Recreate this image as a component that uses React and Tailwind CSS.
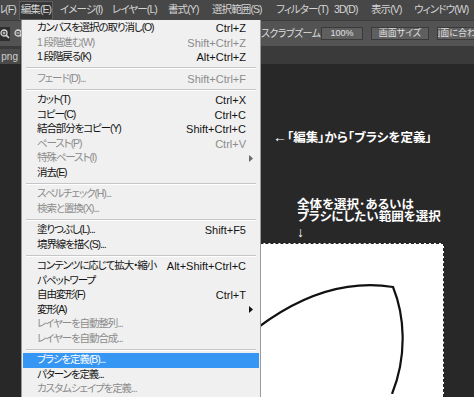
import React from 'react';

// Photoshop "編集" menu open over a dark canvas
const font = { fontFamily: '"Liberation Sans","Noto Sans CJK JP",sans-serif', fontFeatureSettings: '"palt"' };

const menuBar = [
  ['イメージ(I)', 'w-[52px]'],
  ['レイヤー(L)', 'w-[56px]'],
  ['書式(Y)', 'w-[44px]'],
  ['選択範囲(S)', 'w-[64px]'],
  ['フィルター(T)', 'w-[58px]'],
  ['3D(D)', 'w-[37px]'],
  ['表示(V)', 'w-[43px]'],
  ['ウィンドウ(W)', 'w-[60px]'],
];

// sep = separator ; off = disabled ; sub = has submenu ; hi = highlighted
const items = [
  { label: 'カンバスを選択の取り消し(O)', key: 'Ctrl+Z' },
  { label: '1 段階進む(W)', key: 'Shift+Ctrl+Z', off: true },
  { label: '1 段階戻る(K)', key: 'Alt+Ctrl+Z' },
  { sep: true },
  { label: 'フェード(D)...', key: 'Shift+Ctrl+F', off: true },
  { sep: true },
  { label: 'カット(T)', key: 'Ctrl+X' },
  { label: 'コピー(C)', key: 'Ctrl+C' },
  { label: '結合部分をコピー(Y)', key: 'Shift+Ctrl+C' },
  { label: 'ペースト(P)', key: 'Ctrl+V', off: true },
  { label: '特殊ペースト(I)', off: true, sub: true },
  { label: '消去(E)' },
  { sep: true },
  { label: 'スペルチェック(H)...', off: true },
  { label: '検索と置換(X)...', off: true },
  { sep: true },
  { label: '塗りつぶし(L)...', key: 'Shift+F5' },
  { label: '境界線を描く(S)...' },
  { sep: true },
  { label: 'コンテンツに応じて拡大・縮小', key: 'Alt+Shift+Ctrl+C' },
  { label: 'パペットワープ' },
  { label: '自由変形(F)', key: 'Ctrl+T' },
  { label: '変形(A)', sub: true },
  { label: 'レイヤーを自動整列...', off: true },
  { label: 'レイヤーを自動合成...', off: true },
  { sep: true },
  { label: 'ブラシを定義(B)...', hi: true },
  { label: 'パターンを定義...' },
  { label: 'カスタムシェイプを定義...', off: true },
];

const Arrow = ({ off }) => (
  <svg width="4" height="7" viewBox="0 0 4 7" className="absolute right-[6px]">
    <path d="M0 0 L4 3.5 L0 7 Z" fill={off ? '#6a6a6a' : '#111'} />
  </svg>
);

const MenuRow = ({ item }) => {
  if (item.sep) {
    return (
      <div className="h-[7px] flex flex-col justify-center px-[4px]">
        <div className="h-px bg-[#c6c6c6]" />
        <div className="h-px bg-white" />
      </div>
    );
  }
  const color = item.hi ? 'text-white' : item.off ? 'text-[#8c8c8c]' : 'text-[#141414]';
  return (
    <div
      className={`relative h-[14.5px] flex items-center justify-between pl-[14px] pr-[13px] mx-[1px] ${
        item.hi ? 'bg-[#3596f4]' : ''
      } ${color}`}
    >
      <span className="whitespace-nowrap text-[10.5px] tracking-[-1.1px]">{item.label}</span>
      {item.key && <span className="whitespace-nowrap">{item.key}</span>}
      {item.sub && <Arrow off={item.off} />}
    </div>
  );
};

const ZoomIcon = ({ minus }) => (
  <svg width="10" height="10" viewBox="0 0 10 10">
    <circle cx="4" cy="4" r="3" fill="none" stroke="#d8d8d8" strokeWidth="1.3" />
    <path d="M6.2 6.2 L9 9" stroke="#d8d8d8" strokeWidth="1.6" />
    {!minus && <path d="M4 2.5 V5.5" stroke="#d8d8d8" strokeWidth="1" />}
    <path d="M2.5 4 H5.5" stroke="#d8d8d8" strokeWidth="1" />
  </svg>
);

const OptButton = ({ children, w }) => (
  <div
    className={`${w} h-[13px] flex items-center justify-center overflow-hidden bg-[#5f5f5f] border border-[#3a3a3a] text-[9px] text-[#e0e0e0] whitespace-nowrap shrink-0`}
  >
    {children}
  </div>
);

export default function App() {
  return (
    <div className="relative w-[474px] h-[397px] overflow-hidden bg-[#282828] flex flex-col" style={font}>
      {/* menu bar */}
      <div className="h-[20px] shrink-0 bg-[#474747] flex items-center text-[10.5px] tracking-[-0.9px] text-[#d4d4d4]">
        <div className="w-[22px] overflow-hidden flex justify-end">
          <span className="whitespace-nowrap pr-[3px]">ファイル(F)</span>
        </div>
        <div className="w-[40px] h-[19px] flex items-center justify-center bg-[#363636] border border-[#5e5e5e]">
          <span className="whitespace-nowrap">編集(E)</span>
        </div>
        <div className="w-[8px]" />
        {menuBar.map(([label, w]) => (
          <div key={label} className={`${w} shrink-0`}>
            <span className="whitespace-nowrap">{label}</span>
          </div>
        ))}
      </div>

      {/* options bar */}
      <div className="h-[26px] shrink-0 bg-[#535353] border-t border-[#3c3c3c] flex items-center gap-[4px] text-[10px] text-[#dedede]">
        <div className="w-[11px] h-[14px] bg-[#2e2e2e] flex items-center justify-center">
          <ZoomIcon />
        </div>
        <div className="w-[10px] flex items-center">
          <ZoomIcon minus />
        </div>
        <div className="ml-[233px] w-[56px] whitespace-nowrap tracking-[-0.6px]">スクラブズーム</div>
        <OptButton w="w-[42px]">100%</OptButton>
        <div className="w-[4px]" />
        <OptButton w="w-[58px]">画面サイズ</OptButton>
        <div className="w-[8px]" />
        <OptButton w="w-[50px]">画面に合わせる</OptButton>
      </div>

      {/* document tab */}
      <div className="h-[18px] shrink-0 bg-[#3a3a3a] flex items-end">
        <div className="h-[15px] w-[40px] -ml-[20px] bg-[#4a4a4a] flex items-center justify-end pr-[2px] text-[10px] text-[#cfcfcf]">
          png
        </div>
      </div>

      {/* canvas */}
      <div className="flex-1 flex flex-col text-white font-bold text-[12.5px] leading-[12.5px]">
        <div className="pl-[273px] pt-[67px] whitespace-nowrap">
          <span className="text-[14px]">←</span>「編集」から「ブラシを定義」
        </div>
        <div className="pl-[297px] pt-[54px] whitespace-nowrap">
          <div>全体を選択･あるいは</div>
          <div>ブラシにしたい範囲を選択</div>
          <div className="text-[14px] leading-[14px] pt-[1px]">↓</div>
        </div>
        <div className="ml-[150px] w-[294px] mt-[4px] flex-1 bg-white border-t border-r border-dashed border-[#222]">
          <svg width="294" height="150" viewBox="0 0 294 150">
            <path
              d="M40 150 C90 90 160 30 243 43 C254 70 258 110 242 150"
              fill="none"
              stroke="#111"
              strokeWidth="2.2"
            />
          </svg>
        </div>
      </div>

      {/* dropdown */}
      <div className="absolute left-[21px] top-[20px] w-[240px] bottom-0 bg-[#f0f0f0] border-l border-r border-[#9a9a9a] pt-px text-[11px]">
        {items.map((item, i) => (
          <MenuRow key={i} item={item} />
        ))}
      </div>
    </div>
  );
}
